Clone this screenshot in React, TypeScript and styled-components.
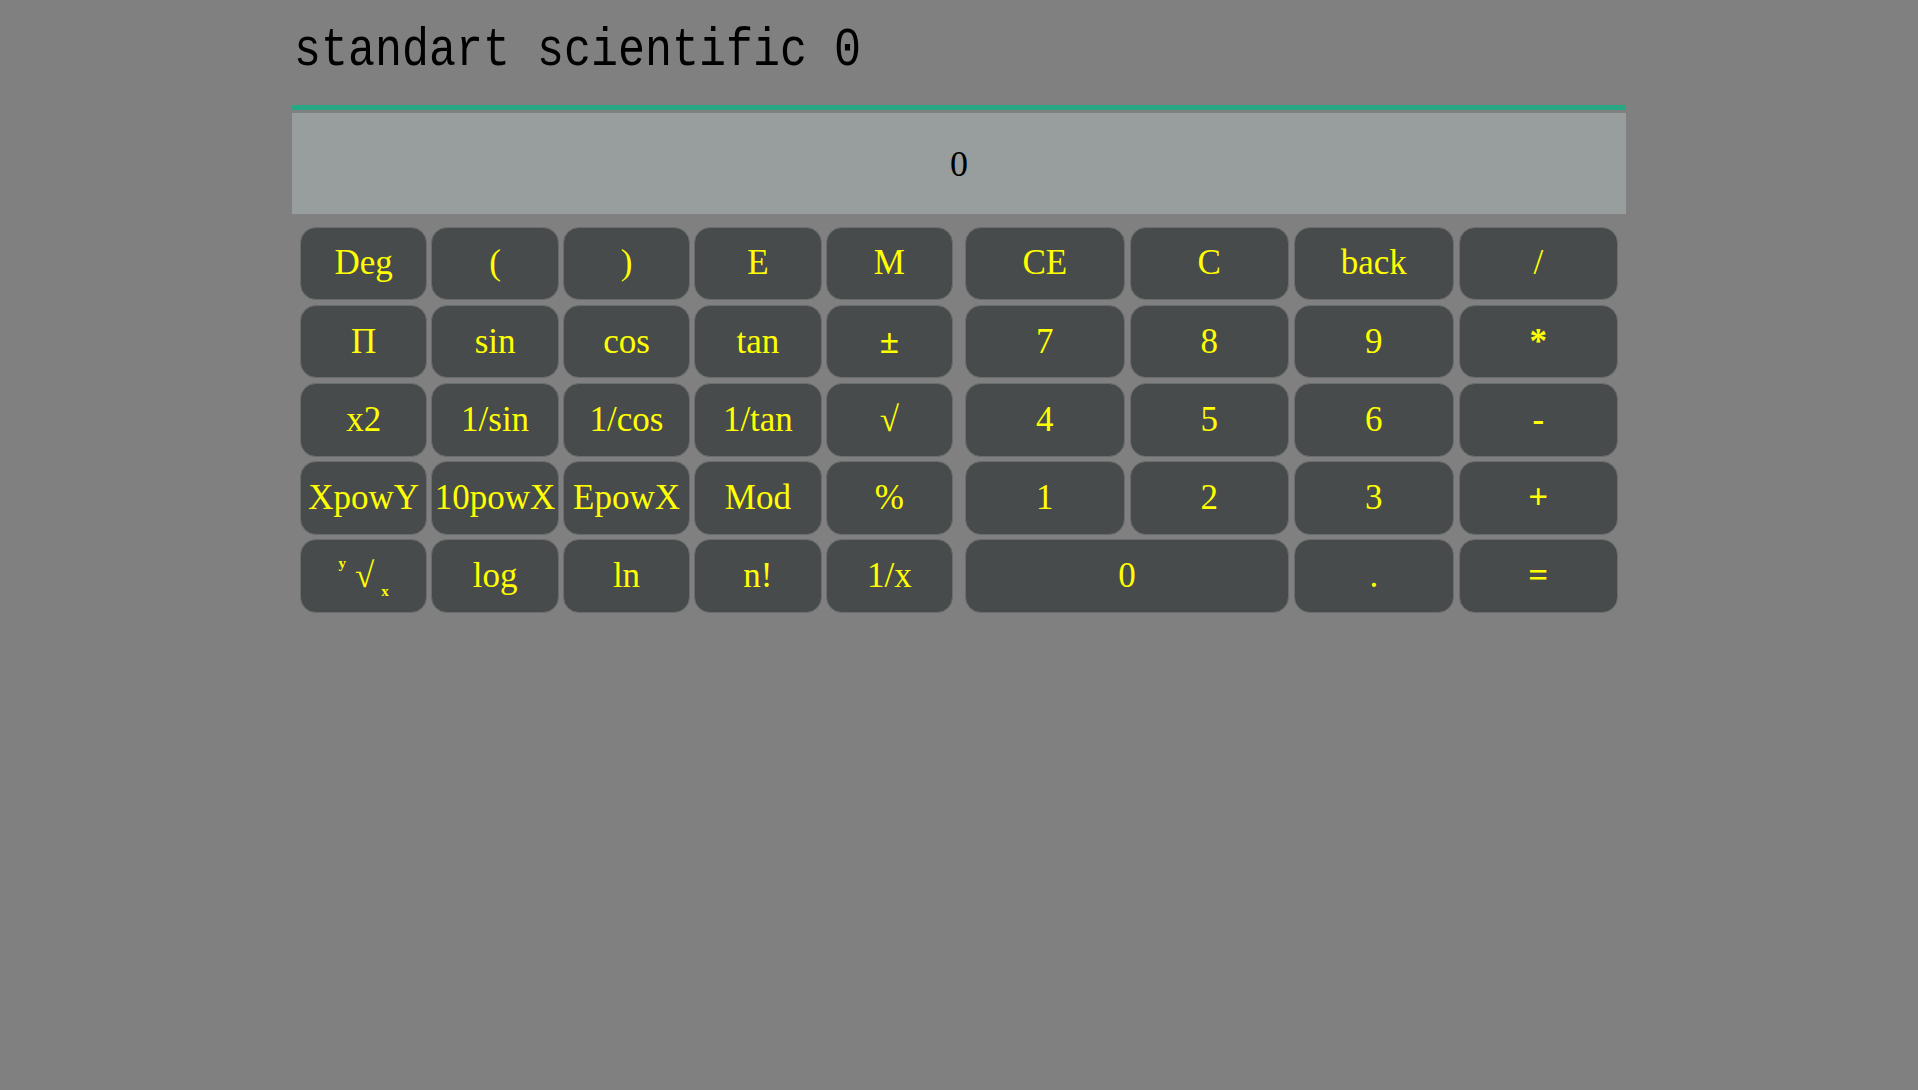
import React from "react";
import styled, { createGlobalStyle } from "styled-components";

const leftKeys = [
  "Deg", "(", ")", "E", "M",
  "Π", "sin", "cos", "tan", "±",
  "x2", "1/sin", "1/cos", "1/tan", "√",
  "XpowY", "10powX", "EpowX", "Mod", "%",
  "yroot", "log", "ln", "n!", "1/x",
];

const rightKeys = [
  "CE", "C", "back", "/",
  "7", "8", "9", "*",
  "4", "5", "6", "-",
  "1", "2", "3", "+",
  "0", ".", "=",
];

const heavy = ["*", "-", "+", "=", "±", "√"];

function App() {
  const [value] = React.useState("0");

  const renderLabel = (k: string) =>
    k === "yroot" ? (
      <RootLabel>
        <Sup>y</Sup>
        <span>√</span>
        <Sub>x</Sub>
      </RootLabel>
    ) : (
      k
    );

  return (
    <>
      <GlobalStyle />
      <Wrapper>
        <Title>standart scientific 0</Title>
        <Display>
          <Screen>{value}</Screen>
        </Display>
        <Keypad>
          <Group cols={5} colGap={4}>
            {leftKeys.map((k) => (
              <Key key={k} bold={heavy.includes(k)}>
                {renderLabel(k)}
              </Key>
            ))}
          </Group>
          <Group cols={4} colGap={5}>
            {rightKeys.map((k) => (
              <Key key={k} span={k === "0" ? 2 : 1} bold={heavy.includes(k)}>
                {k}
              </Key>
            ))}
          </Group>
        </Keypad>
      </Wrapper>
    </>
  );
}

export default App;

const GlobalStyle = createGlobalStyle`
  html, body {
    margin: 0;
    padding: 0;
    background-color: #808080;
    min-height: 100vh;
  }
`;

const Wrapper = styled.div`
  width: 1334px;
  margin: 0 auto;
  padding-top: 31px;
`;

const Title = styled.div`
  font-family: "Liberation Mono", "Courier New", monospace;
  font-size: 45px;
  line-height: 45px;
  height: 45px;
  color: #000;
  margin: 0 0 29px 2px;
  white-space: nowrap;
  transform: scaleY(1.18);
  transform-origin: left 34px;
`;

const Display = styled.div`
  border-top: 5px solid #26a884;
  padding-top: 3px;
`;

const Screen = styled.div`
  height: 101px;
  background-color: #979e9d;
  display: flex;
  align-items: center;
  justify-content: center;
  font-family: "Liberation Serif", "Times New Roman", serif;
  font-size: 36px;
  color: #000;
`;

const Keypad = styled.div`
  display: flex;
  gap: 12px;
  padding: 0 8px;
  margin-top: 12.5px;
`;

const Group = styled.div<{ cols: number; colGap: number }>`
  flex: 1;
  display: grid;
  grid-template-columns: repeat(${(p) => p.cols}, 1fr);
  grid-auto-rows: 73.7px;
  column-gap: ${(p) => p.colGap}px;
  row-gap: 4.5px;
`;

const Key = styled.button<{ span?: number; bold?: boolean }>`
  grid-column: span ${(p) => p.span || 1};
  display: flex;
  align-items: center;
  justify-content: center;
  padding: 0;
  margin: 0;
  background-color: #474b4c;
  border: 1px solid #6a6d6f;
  border-radius: 16px;
  color: #ffff00;
  font-family: "Liberation Serif", "Times New Roman", serif;
  font-size: 35px;
  font-weight: ${(p) => (p.bold ? 700 : 400)};
  white-space: nowrap;
  cursor: pointer;
`;

const RootLabel = styled.span`
  display: inline-flex;
  align-items: center;
  font-size: 35px;
  font-weight: 400;
`;

const Sup = styled.span`
  font-size: 15px;
  font-weight: 700;
  align-self: flex-start;
  margin: -1px 9px 0 0;
`;

const Sub = styled.span`
  font-size: 15px;
  font-weight: 700;
  align-self: flex-end;
  margin: 0 0 -4px 7px;
`;
